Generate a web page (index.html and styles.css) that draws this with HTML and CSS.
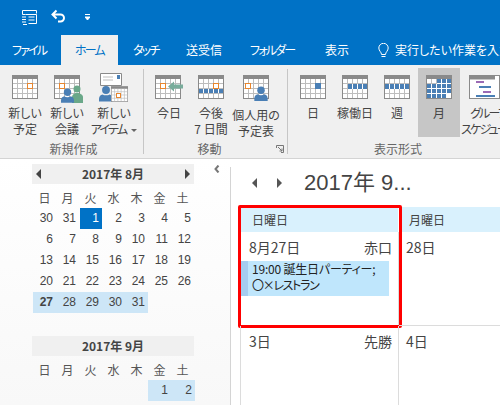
FILE: index.html
```html
<!DOCTYPE html>
<html lang="ja">
<head>
<meta charset="utf-8">
<title>予定表</title>
<link rel="stylesheet" href="styles.css">
</head>
<body>
<svg class="defs" width="0" height="0" aria-hidden="true">
  <symbol id="cal" viewBox="0 0 26 24">
    <rect x="0" y="0" width="26" height="24" fill="#8a8a8a"/>
    <rect x="1" y="4" width="24" height="19" fill="#fff"/>
    <path d="M5.500 4v19M10.500 4v19M15.500 4v19M20.500 4v19M1 8.500h24M1 13.500h24M1 18.500h24" stroke="#bdbdbd" fill="none"/>
  </symbol>
  <symbol id="person" viewBox="0 0 16 18">
    <circle cx="8" cy="5" r="4.500" fill="#4a7fb5"/>
    <path d="M0 18v-3c0-3 2-4.500 4-5 2 1.500 6 1.500 8 0 2 .5 4 2 4 5v3z" fill="#4a7fb5"/>
  </symbol>
</svg>
<div class="app">
  <header class="top">
    <div class="qat">
      <svg class="qat-send" width="17" height="17" viewBox="0 0 17 17"><path d="M1.500 1.500h14v3M1.500 1.500v4h3M4.500 5.500h11v9h-8M7.500 8h6M7.500 11h6M1 8h4M1 10.500h4M1 13h4M2 15.500h4" fill="none" stroke="#fff"/></svg>
      <svg class="qat-undo" width="15" height="14" viewBox="0 0 15 14"><path d="M2 5.500h7.500a3.500 3.500 0 0 1 0 7H7M5.500 1.500L1.500 5.500l4 4" fill="none" stroke="#fff" stroke-width="2"/></svg>
      <svg class="qat-more" width="5" height="6" viewBox="0 0 5 6"><path d="M0 .5h5M0 3h5l-2.500 3z" stroke="#fff" stroke-width="1" fill="#fff"/></svg>
    </div>
    <nav class="tabs">
      <span class="tab tab-file kana">ファイル</span>
      <span class="tab tab-home kana">ホーム</span>
      <span class="tab tab-touch kana">タッチ</span>
      <span class="tab tab-send">送受信</span>
      <span class="tab tab-folder kana">フォルダー</span>
      <span class="tab tab-view">表示</span>
      <svg class="bulb" width="11" height="15" viewBox="0 0 11 15"><path d="M3.500 11.500C3.500 9 .8 8 .8 5a4.700 4.700 0 0 1 9.400 0c0 3-2.700 4-2.700 6.500zM3.500 13.500h4" fill="none" stroke="#fff"/></svg>
      <span class="tab tab-tell">実行したい作業を入力</span>
    </nav>
  </header>

  <section class="ribbon">
    <div class="group group-new">
      <div class="btns">
        <div class="btn"><svg class="ico" width="26" height="24"><use href="#cal"/><rect x="15.500" y="8.500" width="5" height="5" fill="#fff" stroke="#e8862e"/></svg><span>新しい<br>予定</span></div>
        <div class="btn">
          <svg class="ico ico-wide" width="30" height="28" viewBox="0 0 30 28"><use href="#cal" width="26" height="24"/><rect x="5.500" y="8.500" width="5" height="5" fill="#fff" stroke="#e8862e"/><circle cx="23" cy="14" r="3.500" fill="#6aa889"/><path d="M18 28v-6c0-2 2-4 5-4s6 2 6 4v6z" fill="#6aa889"/><use href="#person" x="7" y="13" width="13" height="15"/></svg>
          <span>新しい<br>会議</span></div>
        <div class="btn btn-item">
          <svg class="ico ico-item" width="30" height="30" viewBox="0 0 30 30"><path d="M1.500 .5h21v12h-21z" fill="#fff" stroke="#8a8a8a"/><path d="M4 4h10M4 7h10" stroke="#bdbdbd"/><rect x="18" y="2" width="3" height="4" fill="#4a7fb5"/><use href="#person" x="0" y="12" width="14" height="17"/><use href="#cal" x="12" y="13" width="17" height="16"/><rect x="17.500" y="20.500" width="4" height="4" fill="#fff" stroke="#e8862e"/></svg>
          <span>新しい<br><em class="kana">アイテム</em><i class="caret"></i></span></div>
      </div>
      <div class="glabel">新規作成</div>
    </div>
    <div class="group group-move">
      <div class="btns">
        <div class="btn"><svg class="ico" width="28" height="24" viewBox="0 0 28 24"><use href="#cal" width="26" height="24"/><rect x="5.500" y="8.500" width="5" height="5" fill="#fff" stroke="#e8862e"/><path d="M13 11.500l6-5v3h9v4h-9v3z" fill="#79ac9b"/></svg><span>今日</span></div>
        <div class="btn"><svg class="ico" width="26" height="24"><use href="#cal"/><rect x="1" y="14" width="24" height="4" fill="#4a7fb5"/><path d="M5.500 14v4M10.500 14v4M15.500 14v4M20.500 14v4" stroke="#fff"/><rect x="15.500" y="8.500" width="5" height="5" fill="#fff" stroke="#e8862e"/></svg><span>今後<br>7 日間</span></div>
        <div class="btn btn-own"><svg class="ico" width="26" height="26" viewBox="0 0 26 26"><use href="#cal" width="26" height="24"/><rect x="2.500" y="8.500" width="5" height="5" fill="#fff" stroke="#e8862e"/><use href="#person" x="11" y="11" width="14" height="15"/></svg><span>個人用の<br>予定表</span></div>
      </div>
      <div class="glabel">移動</div>
      <svg class="launcher" width="8" height="8" viewBox="0 0 8 8"><path d="M.5 3V.5H7.500V7.500H5M2 2l4 4M6 3.500V6H3.500" fill="none" stroke="#777"/></svg>
    </div>
    <div class="group group-view">
      <div class="btns">
        <div class="btn"><svg class="ico" width="26" height="24"><use href="#cal"/><rect x="15" y="8" width="6" height="6" fill="#4a7fb5"/></svg><span>日</span></div>
        <div class="btn"><svg class="ico" width="26" height="24"><use href="#cal"/><path d="M6 9h19v5H6z" fill="#4a7fb5"/><path d="M10.500 9v5M15.500 9v5M20.500 9v5" stroke="#fff"/></svg><span>稼働日</span></div>
        <div class="btn"><svg class="ico" width="26" height="24"><use href="#cal"/><path d="M1 9h24v5H1z" fill="#4a7fb5"/><path d="M5.500 9v5M10.500 9v5M15.500 9v5M20.500 9v5" stroke="#fff"/></svg><span>週</span></div>
        <div class="btn btn-on"><svg class="ico" width="26" height="24"><use href="#cal"/><path d="M11 4h14v5H11zM1 9h24v5H1zM1 14h24v5H1zM1 19h20v4H1z" fill="#4a7fb5"/><path d="M5.500 9v14M10.500 9v14M15.500 4v19M20.500 4v19M1 13.500h24M1 18.500h24M11 8.500h14" stroke="#fff"/></svg><span>月</span></div>
        <div class="btn btn-group"><svg class="ico" width="26" height="24"><rect x=".5" y=".5" width="30" height="23" fill="#fff" stroke="#8a8a8a"/><path d="M1 2.500h25" stroke="#8a8a8a" stroke-width="4"/><path d="M7 7h8" stroke="#9b6bb5" stroke-width="2"/><path d="M10 12h12" stroke="#4a7fb5" stroke-width="2"/><path d="M14 17h8" stroke="#9b6bb5" stroke-width="2"/><path d="M7 21h19" stroke="#4a7fb5" stroke-width="2"/></svg><span class="kana">グループ<br>スケジュール</span></div>
      </div>
      <div class="glabel">表示形式</div>
    </div>
  </section>

  <div class="body">
    <aside class="nav">
      <div class="mini">
        <div class="mini-head"><i class="tri tri-l"></i><b>2017年 8月</b><i class="tri tri-r"></i></div>
        <div class="mini-grid">
          <span class="wd">日</span><span class="wd">月</span><span class="wd">火</span><span class="wd">水</span><span class="wd">木</span><span class="wd">金</span><span class="wd">土</span>
          <span>30</span><span>31</span><span class="today">1</span><span>2</span><span>3</span><span>4</span><span>5</span>
          <span>6</span><span>7</span><span>8</span><span>9</span><span>10</span><span>11</span><span>12</span>
          <span>13</span><span>14</span><span>15</span><span>16</span><span>17</span><span>18</span><span>19</span>
          <span>20</span><span>21</span><span>22</span><span>23</span><span>24</span><span>25</span><span>26</span>
          <span class="sel"><b>27</b></span><span class="sel">28</span><span class="sel">29</span><span class="sel">30</span><span class="sel">31</span>
        </div>
      </div>
      <div class="mini mini-2">
        <div class="mini-head"><b>2017年 9月</b></div>
        <div class="mini-grid">
          <span class="wd">日</span><span class="wd">月</span><span class="wd">火</span><span class="wd">水</span><span class="wd">木</span><span class="wd">金</span><span class="wd">土</span>
          <span></span><span></span><span></span><span></span><span></span><span class="sel">1</span><span class="sel">2</span>
        </div>
      </div>
      <svg class="collapse" width="6" height="8" viewBox="0 0 6 8"><path d="M4.500 .5L1.500 4l3 3.500" fill="none" stroke="#777" stroke-width="2"/></svg>
    </aside>
    <main class="main">
      <div class="title-row">
        <i class="tri-s tri-sl"></i><i class="tri-s tri-sr"></i>
        <h1>2017年 9...</h1>
      </div>
      <div class="month">
        <div class="dow dow-first">日曜日</div>
        <div class="dow dow-next">月曜日</div>
        <div class="day day-first">
          <div class="day-top"><span>8月27日</span><span>赤口</span></div>
          <div class="event"><p>19:00 誕生日パーティー;</p><p class="event-place">〇×レストラン</p></div>
          <div class="mark"></div>
        </div>
        <div class="day day-next"><div class="day-top"><span>28日</span></div></div>
        <div class="day"><div class="day-top"><span>3日</span><span>先勝</span></div></div>
        <div class="day day-next"><div class="day-top"><span>4日</span></div></div>
      </div>
    </main>
  </div>
</div>
</body>
</html>
```
FILE: styles.css
```css
* { box-sizing: border-box; }
html, body { margin: 0; padding: 0; }
body {
  width: 500px;
  height: 405px;
  overflow: hidden;
  background: #fff;
  color: #444;
  font-family: "Noto Sans CJK JP", "Noto Sans", sans-serif;
  font-feature-settings: "palt";
  font-size: 12px;
}
.defs { position: absolute; }
.app { width: 500px; height: 405px; display: flex; flex-direction: column; overflow: hidden; }
.kana { letter-spacing: -1.8px; font-style: normal; }

.top { height: 65px; background: #0072c6; color: #fff; flex: none; }
.qat { height: 35px; display: flex; align-items: center; padding-left: 21px; }
.qat-undo { margin-left: 13px; margin-top: -3px; }
.qat-more { margin-left: 19px; margin-top: -1px; }
.tabs { height: 30px; display: flex; align-items: center; white-space: nowrap; overflow: hidden; }
.tab { line-height: 30px; flex: none; }
.tab-file { margin-left: 12px; width: 49px; }
.tab-home { width: 57px; background: #f0f0f0; color: #0072c6; text-align: center; }
.tab-touch { margin-left: 15px; width: 53px; }
.tab-send { width: 64px; }
.tab-folder { width: 75px; }
.tab-view { width: 53px; }
.bulb { flex: none; margin-right: 6px; }

.ribbon { height: 94px; flex: none; display: flex; background: #f0f0f0; border-bottom: 1px solid #d4d4d4; position: relative; }
.group { position: relative; border-right: 1px solid #c6c6c6; margin-top: 4px; margin-bottom: 4px; flex: none; display: flex; flex-direction: column; }
.group-new { width: 144px; padding-left: 4px; }
.group-move { width: 144px; padding-left: 4px; }
.group-view { flex: 1; border-right: 0; padding-left: 4px; min-width: 0; }
.btns { display: flex; height: 69px; margin-top: -1px; flex: none; }
.btn { width: 42px; height: 69px; flex: none; display: flex; flex-direction: column; align-items: center; text-align: center; line-height: 16px; padding-top: 7px; color: #444; white-space: nowrap; }
.btn span { display: block; margin-top: 6px; }
.ico { display: block; flex: none; overflow: visible; }
.ico-wide { margin-right: -4px; margin-bottom: -4px; }
.ico-item { margin-top: -2px; margin-bottom: -4px; }
.btn-item { width: 46px; margin-left: 3px; }
.btn-own { margin-left: 3px; }
.btn-on { background: #c6c6c6; }
.btn-group { width: 42px; align-items: flex-start; padding-left: 9px; }
.btn-group span { margin-left: -8px; }
.caret { display: inline-block; width: 0; height: 0; margin-left: 5px; vertical-align: 2px; border: 3px solid transparent; border-top-color: #666; border-bottom: 0; }
.glabel { text-align: center; color: #666; line-height: 16px; margin-top: 4px; flex: none; }
.group-move .glabel { padding-right: 16px; }
.group-view .glabel { padding-left: 4px; }
.launcher { position: absolute; right: 3px; bottom: 1px; }

.body { flex: 1; display: flex; min-height: 0; }
.nav { width: 230px; flex: none; position: relative; background: linear-gradient(#fff, #f8f8f8); padding: 5px 0 0 32px; }
.collapse { position: absolute; left: 214px; top: 6px; }
.mini { width: 162px; }
.mini-2 { margin-top: 23px; }
.mini-head { height: 20px; background: #f0f0f0; display: flex; align-items: center; justify-content: center; position: relative; color: #444; font-size: 12px; line-height: 20px; }
.tri { position: absolute; top: 5px; border: 5px solid transparent; width: 0; height: 0; }
.tri-l { left: 4px; border-left: 0; border-right-color: #444; }
.tri-r { right: 4px; border-right: 0; border-left-color: #444; }
.mini-grid { display: grid; grid-template-columns: repeat(7, 23px); grid-auto-rows: 21px; padding: 3px 0 0 1px; font-family: "Liberation Sans", "Noto Sans CJK JP", sans-serif; font-size: 12px; color: #444; }
.mini-grid span { text-align: right; padding-right: 3px; line-height: 21px; }
.mini-grid .wd { text-align: center; padding: 0; color: #555; font-family: "Noto Sans CJK JP", sans-serif; }
.mini-grid .today { background: #0072c6; color: #fff; margin-left: 1px; }
.mini-grid .sel { background: #cde6f7; }
.mini-2 .mini-grid .sel:last-child { margin-right: -1px; }

.main { flex: 1; min-width: 0; border-left: 1px solid #d4d4d4; margin-top: 8px; padding-left: 9px; }
.title-row { height: 40px; display: flex; align-items: center; padding-bottom: 8px; }
.tri-s { width: 0; height: 0; border: 5px solid transparent; flex: none; }
.tri-sl { margin-left: 12px; border-left: 0; border-right-color: #555; }
.tri-sr { margin-left: 20px; border-right: 0; border-left-color: #555; }
h1 { margin: 0 0 0 22px; font-weight: 400; font-size: 22px; line-height: 32px; color: #444; white-space: nowrap; font-family: "Liberation Sans", "Noto Sans CJK JP", sans-serif; }
.month { display: grid; grid-template-columns: 159px 101px; grid-template-rows: 25px 94px 80px; }
.dow { background: #d9f1fd; line-height: 25px; padding-left: 12px; color: #444; font-size: 12px; }
.dow-first { border-right: 1px solid #fff; }
.dow-next { padding-left: 10px; }
.day { position: relative; border-left: 1px solid #dcdcdc; border-bottom: 1px solid #dcdcdc; border-right: 1px solid #dcdcdc; }
.day-next { border-left: 0; border-right: 0; }
.day-top { display: flex; justify-content: space-between; padding: 5px 6px 0 8px; font-size: 14px; line-height: 20px; color: #444; }
.day-next .day-top { padding-left: 7px; }
.event { margin-top: 4px; margin-right: 9px; height: 35px; background: #bfe6fc; border-left: 7px solid #a5cdf0; padding-left: 4px; color: #222; font-size: 12px; line-height: 15.500px; white-space: nowrap; }
.event p { margin: 0; letter-spacing: -.2px; }
.event .event-place { letter-spacing: -1.300px; }
.mark { position: absolute; left: -3px; top: -27px; width: 164px; height: 123px; border: 3px solid #f00; border-radius: 2px; }
```
